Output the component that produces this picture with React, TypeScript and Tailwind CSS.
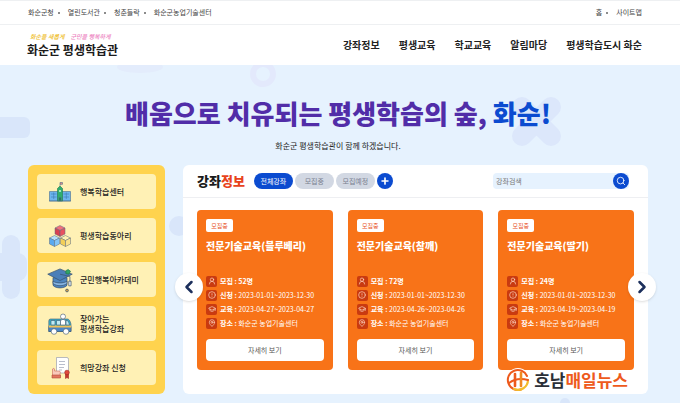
import { useState } from 'react'
import { ChevronLeft, ChevronRight, CircleAlert, GraduationCap, MapPin, Plus, Search, UserRound } from 'lucide-react'

const topLinks = ['화순군청', '열린도서관', '청춘들락', '화순군농업기술센터']
const navLinks = ['강좌정보', '평생교육', '학교교육', '알림마당', '평생학습도시 화순']
const tabs = ['전체강좌', '모집중', '모집예정']

const courses = [
  { title: '전문기술교육(블루베리)', seats: '52명', apply: '2023-01-01~2023-12-30', period: '2023-04-27~2023-04-27', place: '화순군 농업기술센터' },
  { title: '전문기술교육(참깨)', seats: '72명', apply: '2023-01-01~2023-12-30', period: '2023-04-26~2023-04-26', place: '화순군 농업기술센터' },
  { title: '전문기술교육(딸기)', seats: '24명', apply: '2023-01-01~2023-12-30', period: '2023-04-19~2023-04-19', place: '화순군 농업기술센터' },
]

const SchoolIcon = () => (
  <svg viewBox="0 0 24 24" className="size-6 shrink-0" stroke="#4a6f90" strokeWidth="0.6" strokeLinejoin="round">
    <path d="M12 6V2.500h2.500v1.800H12" fill="#f08a80" />
    <path d="M1.500 11.500h21V21h-21z" fill="#6db5ee" />
    <path d="M9.500 21V8.500L12 6l2.500 2.500V21z" fill="#2fae6e" stroke="#23774b" />
    <path d="M3 14h5.500M3 17h5.500M15.500 14h5.500M15.500 17h5.500M5.700 12.500v6.500M18.300 12.500v6.500" stroke="#3a78b5" fill="none" />
    <path d="M11 21v-3.500h2V21M1 21h22" fill="#1f7a50" />
    <circle cx="12" cy="11" r="1" fill="#c9f2dc" stroke="none" />
  </svg>
)

const Cube = ({ x, y, top, left, right }: any) => (
  <g transform={`translate(${x} ${y})`}>
    <path d="M0 -5.500L5 -3L0 -.5L-5 -3Z" fill={top} />
    <path d="M-5 -3L0 -.5V5.500L-5 3Z" fill={left} />
    <path d="M5 -3L0 -.5V5.500L5 3Z" fill={right} />
  </g>
)

const CubesIcon = () => (
  <svg viewBox="0 0 24 24" className="size-6 shrink-0" stroke="#5b6b80" strokeWidth="0.5" strokeLinejoin="round">
    <Cube x={12} y={7} top="#f5707c" left="#d93f50" right="#e8525f" />
    <Cube x={6.5} y={17} top="#b5defb" left="#5aaaf0" right="#83c5f8" />
    <Cube x={17.5} y={17} top="#fff2b0" left="#f3cf58" right="#fbe28a" />
  </svg>
)

const CapIcon = () => (
  <svg viewBox="0 0 24 24" className="size-7 -mx-0.5 shrink-0" stroke="#38516e" strokeWidth="0.6" strokeLinejoin="round">
    <path d="M6 10v6.500c2 3 10 3 12 0V10z" fill="#4e86c0" />
    <path d="M6 13c3 2 9 2 12 0v2c-3 2.500-9 2.500-12 0z" fill="#86b5e2" />
    <path d="M1.500 7L12 2.500L22.500 7L12 12.500Z" fill="#4b7fb8" />
    <path d="M17 4l2-1 2 1.500-1.500 2.500-2.500-.5z" fill="#2fa568" stroke="#23774b" />
    <path d="M12 7l8.500 2v5" fill="none" />
    <path d="M19.500 13h2v4h-2z" fill="#e9eef4" />
    <circle cx="18" cy="21" r="1.200" fill="#d0a04a" />
  </svg>
)

const BusIcon = () => (
  <svg viewBox="0 0 24 24" className="size-6 shrink-0" stroke="#3c5670" strokeWidth="0.6" strokeLinejoin="round">
    <path d="M2.500 7h17c2 0 3.500 4 3.500 6v6.500H.8V9q0-2 1.700-2z" fill="#38b0c8" />
    <path d="M.8 14.500H23v5H.8z" fill="#4a86c8" />
    <path d="M.8 13.500H23v2H.8z" fill="#f2c057" stroke="none" />
    <path d="M3 8.500h4v4.500H3zM8.500 8.500h4V13h-4zM18 8.500h1.500q1.500 2 2 4.500H18z" fill="#bdebf5" />
    <path d="M12.500 13V8.500q2.500-2.500 5 0V13z" fill="#fff" />
    <circle cx="15" cy="4.500" r="2.500" fill="#fff" />
    <circle cx="6" cy="19.500" r="2.800" fill="#fff" />
    <circle cx="18" cy="19.500" r="2.800" fill="#fff" />
  </svg>
)

const FormIcon = () => (
  <svg viewBox="0 0 24 24" className="size-6 shrink-0" stroke="#8a90a8" strokeWidth="0.6" strokeLinejoin="round">
    <path d="M8.500 1.500h10.500q1.500 0 1.500 2V17H8.500z" fill="#fff" />
    <path d="M11 5.500h6M11 8.500h6M11 11.500h5M11 14h3" fill="none" />
    <path d="M4.500 21v-8q1.500-1.500 2 0v2h5q1.500 1 .5 3v3z" fill="#f9c9bb" stroke="#c96b58" />
    <path d="M4 19h8.500v3H4z" fill="#e27560" stroke="#b3493a" />
    <path d="M17.500 18v4.500l1.500-1 1.500 1V18z" fill="#c9362c" stroke="#a02a22" />
    <circle cx="19" cy="16.500" r="2.300" fill="#e0493c" stroke="#a02a22" />
  </svg>
)

const menus = [
  { lines: ['행복학습센터'], icon: <SchoolIcon /> },
  { lines: ['평생학습동아리'], icon: <CubesIcon /> },
  { lines: ['군민행복아카데미'], icon: <CapIcon /> },
  { lines: ['찾아가는', '평생학습강좌'], icon: <BusIcon /> },
  { lines: ['희망강좌 신청'], icon: <FormIcon /> },
]

const LinkRow = ({ links }: { links: string[] }) => (
  <ul className="flex items-center gap-1">
    {links.map((link, i) => (
      <li key={link} className="flex items-center gap-1">
        {i > 0 && <span className="mr-1 size-0.5 rounded-full bg-[#666]" />}
        <a href="#">{link}</a>
      </li>
    ))}
  </ul>
)

const InfoRow = ({ icon: Icon, label, value }: any) => (
  <li className="flex h-[14px] items-center gap-[3px]">
    <span className="flex size-[11px] items-center justify-center rounded-xs bg-[#c93a10]">
      <Icon className="size-2 text-[#ffd9c7]" strokeWidth={2} />
    </span>
    <span className="whitespace-nowrap">
      <b className="font-bold">{label} :</b> {value}
    </span>
  </li>
)

const CourseCard = ({ course }: any) => (
  <article className="flex min-w-0 flex-1 flex-col rounded bg-[#f87318] p-[9px] text-white">
    <span className="flex h-[13px] w-[27px] items-center justify-center rounded-xs bg-white text-[6px] text-[#e8501c]">모집중</span>
    <h3 className="mt-[7px] whitespace-nowrap text-[10px] leading-[14px] font-black">{course.title}</h3>
    <ul className="mt-[21px] text-[7px]">
      <InfoRow icon={UserRound} label="모집" value={<b>{course.seats}</b>} />
      <InfoRow icon={CircleAlert} label="신청" value={course.apply} />
      <InfoRow icon={GraduationCap} label="교육" value={course.period} />
      <InfoRow icon={MapPin} label="장소" value={course.place} />
    </ul>
    <button type="button" className="mt-[9px] h-[22px] rounded bg-white text-[7px] text-[#555]">
      자세히 보기
    </button>
  </article>
)

// Pale shapes scattered behind the hero
const HeroShapes = () => (
  <div className="pointer-events-none absolute inset-0 overflow-hidden" aria-hidden="true">
    <svg width="680" height="338" fill="#d9e6fa">
      <rect x="-20" y="52" width="50" height="21" rx="6" />
      <rect x="2" y="170" width="18" height="64" rx="9" />
      <rect x="-12" y="188" width="39" height="28" rx="9" />
      <circle cx="179" cy="161" r="10" />
      <circle cx="565" cy="338" r="5" />
      <g stroke="#dce7fb" strokeWidth="20" strokeLinecap="round">
        <path d="M522 42L551 71M551 42L522 71" />
      </g>
      <circle cx="263" cy="9" r="10" fill="none" stroke="#e3e9fc" strokeWidth="6" />
      <ellipse cx="140" cy="2" rx="23" ry="6" fill="#e3ecfc" />
    </svg>
  </div>
)

const App = () => {
  const [activeTab, setActiveTab] = useState('전체강좌')
  const [keyword, setKeyword] = useState('')

  return (
    <div className="flex min-h-screen flex-col bg-[#e6f2fe] font-['Noto_Sans_CJK_KR',sans-serif] text-[#222]">
      {/* Top bar */}
      <div className="flex h-[25px] items-center justify-between border-y border-[#eef0f2] bg-white pr-[38px] pl-7 text-[7px] text-[#444]">
        <LinkRow links={topLinks} />
        <LinkRow links={['홈', '사이트맵']} />
      </div>

      {/* Header */}
      <header className="flex h-10 items-center justify-between bg-white pr-[38px] pl-[27px]">
        <a href="#" className="block">
          <span className="flex gap-1.5 pl-[3px] pt-0.5 text-[6px] leading-[8px] font-medium italic">
            <span className="text-[#eebb22]">화순을 새롭게</span>
            <span className="text-[#ec7fc0]">군민을 행복하게</span>
          </span>
          <span className="block text-[12px] leading-[18px] font-bold text-[#1b1b1b]">화순군 평생학습관</span>
        </a>
        <nav className="flex gap-[19px] text-[10px] leading-[14px] font-bold">
          {navLinks.map((link) => (
            <a key={link} href="#">{link}</a>
          ))}
        </nav>
      </header>

      {/* Hero */}
      <main className="relative flex-1 pt-8 pr-8 pb-[9px] pl-7">
        <HeroShapes />
        <div className="relative text-center">
          <h1 className="text-[26px] leading-8 font-black text-[#512da8]">
            배움으로 치유되는 평생학습의 숲, <span className="text-[#0b4bd0]">화순!</span>
          </h1>
          <p className="mt-[11px] text-[8px] leading-3">화순군 평생학습관이 함께 하겠습니다.</p>
        </div>

        <div className="relative mt-[13px] flex gap-[18px]">
          {/* Quick menu */}
          <aside className="flex w-[137px] shrink-0 flex-col gap-[9px] rounded-md bg-[#ffd34e] p-[9px]">
            {menus.map((menu) => (
              <a key={menu.lines[0]} href="#" className="flex h-[35px] items-center gap-2 rounded bg-[#fff1b5] pl-[11px] text-[8px] leading-[10px] font-medium">
                {menu.icon}
                <span>
                  {menu.lines.map((line) => (
                    <span key={line} className="block">{line}</span>
                  ))}
                </span>
              </a>
            ))}
          </aside>

          {/* Course list */}
          <section className="relative min-w-0 flex-1 rounded-md bg-white">
            <div className="flex h-[33px] items-center border-b border-[#eeeff2] pr-[19px] pl-[14px]">
              <h2 className="text-[13px] leading-4 font-black text-[#1b1b1b]">
                강좌<span className="text-[#e8431c]">정보</span>
              </h2>
              <div className="ml-[9px] flex gap-0.5 text-[7px]">
                {tabs.map((tab) => (
                  <button
                    key={tab}
                    type="button"
                    onClick={() => setActiveTab(tab)}
                    className={`h-4 w-[39px] rounded-full ${
                      activeTab === tab ? 'bg-[#0b4bd0] text-white' : 'bg-[#d2d8e3] text-[#7a8090]'
                    }`}
                  >
                    {tab}
                  </button>
                ))}
                <button type="button" aria-label="더보기" className="flex size-4 items-center justify-center rounded-full bg-[#0b4bd0] text-white">
                  <Plus className="size-2.5" strokeWidth={4} />
                </button>
              </div>
              <form className="ml-auto flex h-4 w-[136px] rounded bg-[#e6f2fe]" onSubmit={(e) => e.preventDefault()}>
                <input
                  type="text"
                  aria-label="강좌검색"
                  placeholder="강좌검색"
                  value={keyword}
                  onChange={(e) => setKeyword(e.target.value)}
                  className="min-w-0 flex-1 bg-transparent pl-[3px] text-[7px] outline-none placeholder:text-[#777]"
                />
                <button type="submit" aria-label="검색" className="flex size-4 items-center justify-center rounded-full bg-[#0b4bd0] text-white">
                  <Search className="size-2.5" strokeWidth={2} />
                </button>
              </form>
            </div>

            <div className="flex gap-[15px] px-[14px] pt-3 pb-[23px]">
              {courses.map((course) => (
                <CourseCard key={course.title} course={course} />
              ))}
            </div>

            <button type="button" aria-label="이전" className="absolute top-[108px] -left-2 flex size-7 items-center justify-center rounded-full bg-white text-[#1c2f5c] shadow">
              <ChevronLeft className="size-5" strokeWidth={3} />
            </button>
            <button type="button" aria-label="다음" className="absolute top-[108px] -right-2 flex size-7 items-center justify-center rounded-full bg-white text-[#1c2f5c] shadow">
              <ChevronRight className="size-5" strokeWidth={3} />
            </button>

            {/* Press mark */}
            <div className="absolute right-5 bottom-0.5 flex items-center gap-1 text-[17px] leading-6 font-bold [text-shadow:1px_0_#fff,-1px_0_#fff,0_1px_#fff,0_-1px_#fff,1px_1px_#fff,-1px_-1px_#fff]">
              <svg viewBox="0 0 24 24" className="size-6" fill="none" strokeLinecap="round">
                <circle cx="12" cy="12" r="12" fill="#fff" />
                <path d="M15 21.500A10 10 0 1 1 21 8" stroke="#ee5a1c" strokeWidth="2" />
                <path d="M22 12A10 10 0 0 1 8 21" stroke="#f3bd2b" strokeWidth="2.200" />
                <path d="M3 15Q11 9 22 12" stroke="#ee5a1c" strokeWidth="2" />
                <path d="M9 6v12" stroke="#ee5a1c" strokeWidth="2.600" />
                <path d="M15 5v13" stroke="#f08a22" strokeWidth="2.600" />
              </svg>
              <span className="whitespace-nowrap text-[#2b2f38]">
                호남<span className="text-[#ee5a1c]">매일뉴스</span>
              </span>
            </div>
          </section>
        </div>
      </main>
    </div>
  )
}

export default App
